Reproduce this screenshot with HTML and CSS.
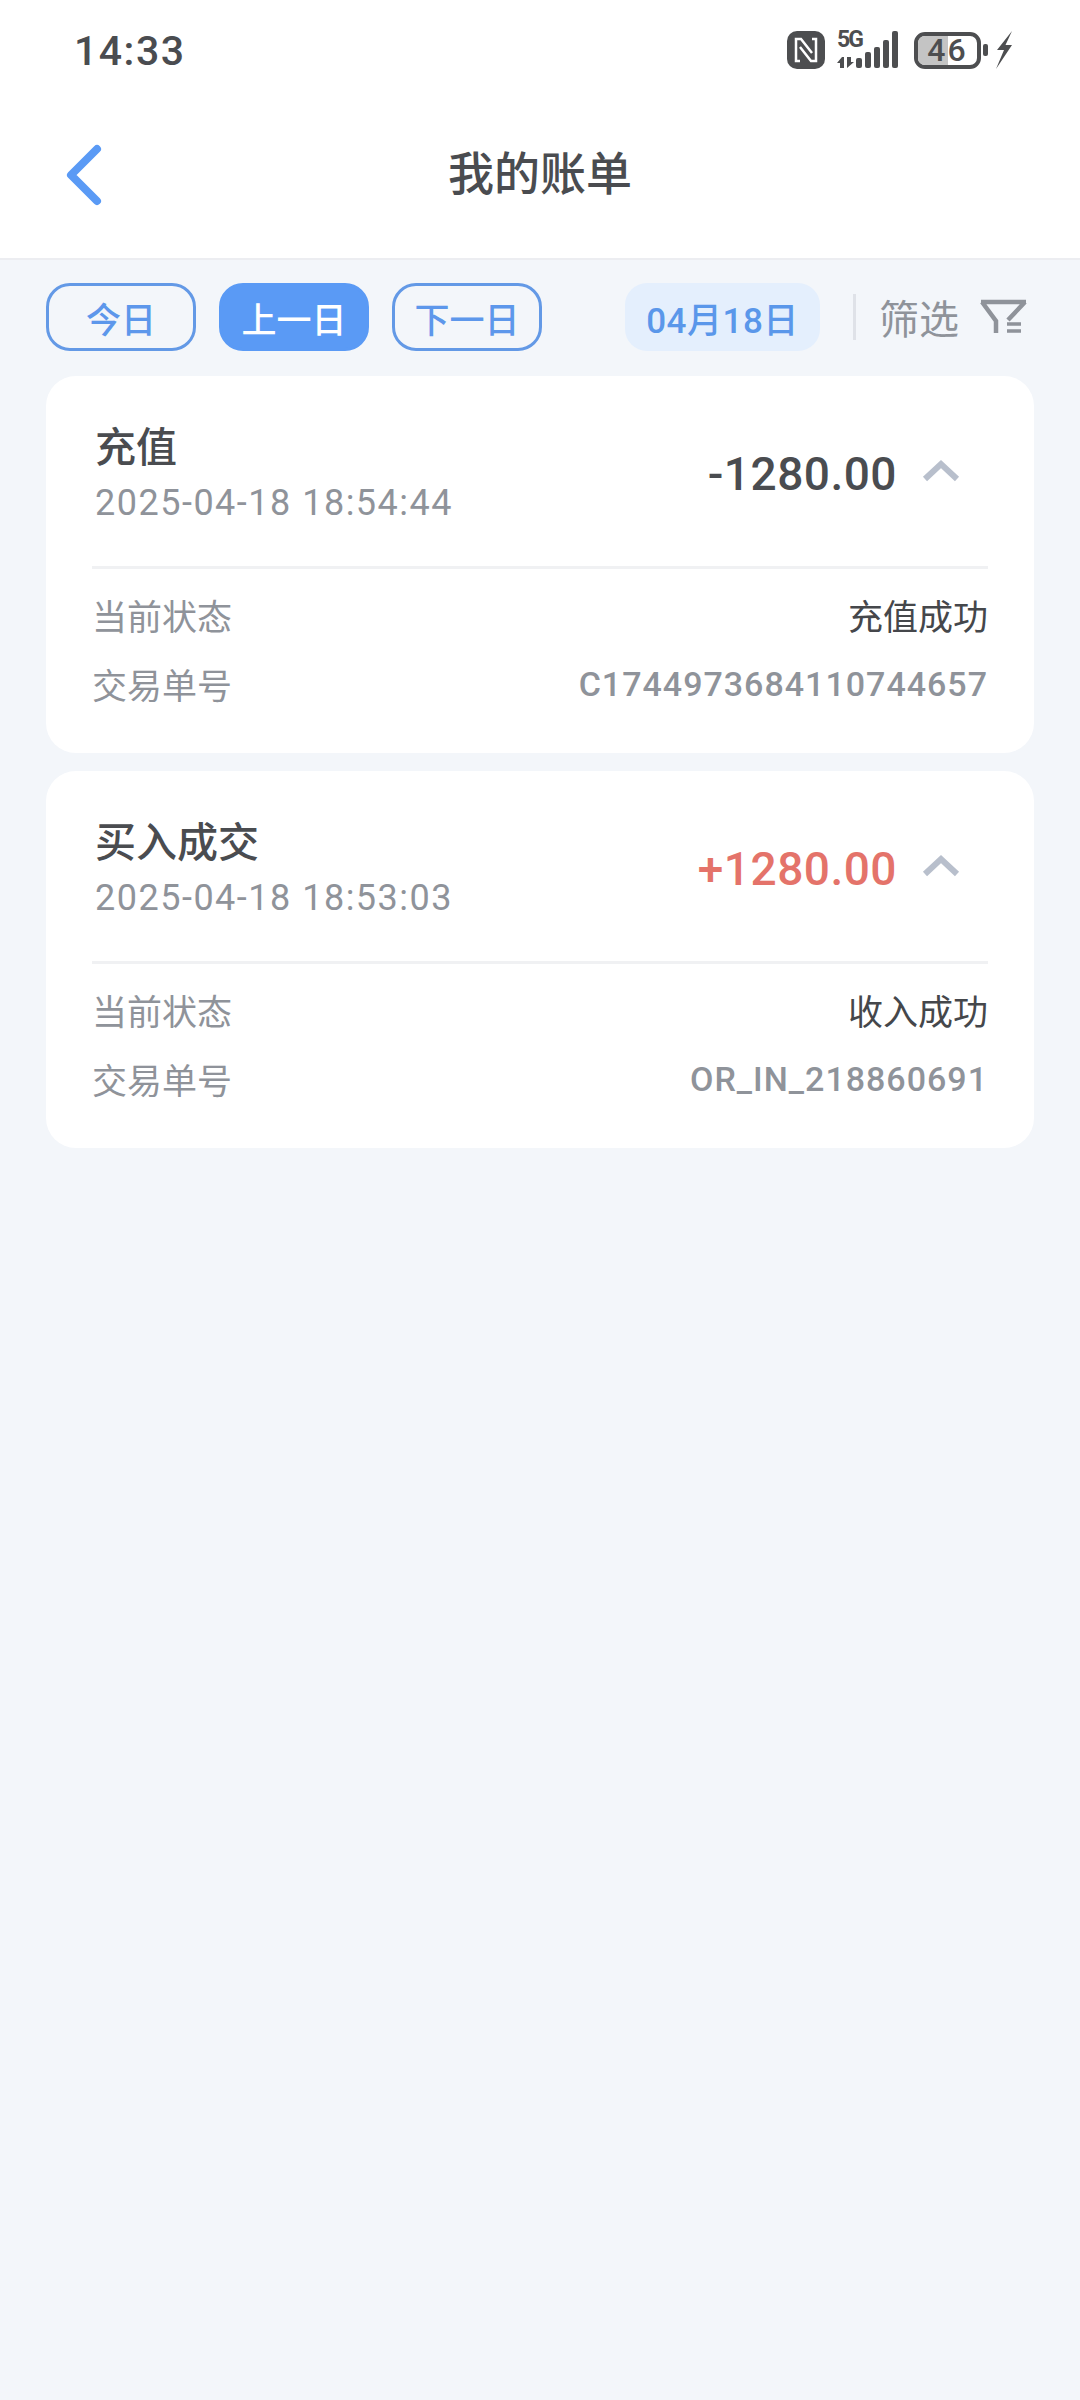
FILE: index.html
```html
<!DOCTYPE html>
<html lang="zh-CN">
<head>
  <meta charset="UTF-8">
  <title>我的账单</title>
  <link rel="stylesheet" href="styles.css">
</head>
<body>

<header class="top">
  <div class="status">
    <span class="clock">14:33</span>
    <div class="status-icons">
      <svg class="nfc" width="38" height="38" viewBox="0 0 38 38">
        <rect width="38" height="38" rx="10" fill="#4d4e50"/>
        <path d="M13 30H9V8h5l11 14M25 8h4v22h-5L13 16" fill="none" stroke="#fff" stroke-width="2.500"/>
      </svg>
      <div class="signal">
        <span class="five-g">5G</span>
        <svg width="61" height="38" viewBox="0 0 61 38">
          <path d="M5 26L0 32h3v5h4V26zM10 26v11l7-6h-3v-5z" fill="#4d4e50"/>
          <rect x="19" y="27" width="6" height="10" rx="2" fill="#4d4e50"/>
          <rect x="28" y="21" width="6" height="16" rx="2" fill="#4d4e50"/>
          <rect x="37" y="16" width="6" height="21" rx="2" fill="#4d4e50"/>
          <rect x="46" y="9" width="6" height="28" rx="2" fill="#4d4e50"/>
          <rect x="55" y="0" width="6" height="37" rx="2" fill="#4d4e50"/>
        </svg>
      </div>
      <div class="battery">
        <div class="battery-body">
          <span class="battery-fill"></span>
          <span class="battery-num">46</span>
        </div>
        <span class="battery-cap"></span>
      </div>
      <svg class="bolt" width="16" height="38" viewBox="0 0 16 38">
        <path d="M16 0L1 19h7L0 38l16-24H9.500L16 0z" fill="#4d4e50"/>
      </svg>
    </div>
  </div>
  <div class="navbar">
    <svg class="back" width="36" height="62" viewBox="0 0 36 62">
      <path d="M31 5L5 31l26 26" fill="none" stroke="#5a9af5" stroke-width="8" stroke-linecap="round" stroke-linejoin="round"/>
    </svg>
    <h1>我的账单</h1>
  </div>
</header>

<div class="toolbar">
  <button class="day">今日</button>
  <button class="day active">上一日</button>
  <button class="day">下一日</button>
  <span class="date-chip">04月18日</span>
  <span class="sep"></span>
  <span class="filter-label">筛选</span>
  <svg class="filter-icon" width="48" height="38" viewBox="0 0 48 38">
    <path d="M1 4h45M2 4l14 19v12M45 4L28 22" fill="none" stroke="#8f939a" stroke-width="4.500"/>
    <path d="M27 26h14M27 33h14" fill="none" stroke="#8f939a" stroke-width="3.500"/>
  </svg>
</div>

<main class="list">
  <section class="card">
    <div class="card-head">
      <div>
        <div class="card-title">充值</div>
        <div class="card-time">2025-04-18 18:54:44</div>
      </div>
      <div class="amount">-1280.00</div>
      <svg class="chevron" width="38" height="24" viewBox="0 0 38 24">
        <path d="M3 20L19 5l16 15" fill="none" stroke="#b8bfcc" stroke-width="6"/>
      </svg>
    </div>
    <div class="row">
      <span class="row-label">当前状态</span>
      <span class="row-value">充值成功</span>
    </div>
    <div class="row">
      <span class="row-label">交易单号</span>
      <span class="row-no">C1744973684110744657</span>
    </div>
  </section>

  <section class="card">
    <div class="card-head">
      <div>
        <div class="card-title">买入成交</div>
        <div class="card-time">2025-04-18 18:53:03</div>
      </div>
      <div class="amount income">+1280.00</div>
      <svg class="chevron" width="38" height="24" viewBox="0 0 38 24">
        <path d="M3 20L19 5l16 15" fill="none" stroke="#b8bfcc" stroke-width="6"/>
      </svg>
    </div>
    <div class="row">
      <span class="row-label">当前状态</span>
      <span class="row-value">收入成功</span>
    </div>
    <div class="row">
      <span class="row-label">交易单号</span>
      <span class="row-no">OR_IN_218860691</span>
    </div>
  </section>
</main>

</body>
</html>
```

FILE: styles.css
```css
* {
  box-sizing: border-box;
}

body {
  margin: 0;
  min-height: 2400px;
  background-color: #f3f6fa;
  font-family: Roboto, "Noto Sans CJK SC", sans-serif;
  color: #4a4c50;
}

.top {
  height: 260px;
  background-color: #fff;
  border-bottom: 2px solid #ecedf1;
}

.status {
  height: 100px;
  padding: 0 68px 0 74px;
  display: flex;
  align-items: center;
  justify-content: space-between;
}

.clock {
  margin-top: 2px;
  font-size: 41px;
  font-weight: 500;
  letter-spacing: 1.500px;
}

.status-icons {
  display: flex;
  align-items: center;
}

.signal {
  position: relative;
  width: 61px;
  height: 38px;
  margin-left: 12px;
}

.five-g {
  position: absolute;
  left: 0;
  top: -1px;
  font-size: 23px;
  line-height: 20px;
  font-weight: 700;
  letter-spacing: -2px;
  color: #4d4e50;
}

.battery {
  display: flex;
  align-items: center;
  gap: 2px;
  margin-left: 16px;
}

.battery-body {
  position: relative;
  width: 67px;
  height: 37px;
  border: 4px solid #4d4e50;
  border-radius: 11px;
  display: flex;
  align-items: center;
  justify-content: center;
}

.battery-fill {
  position: absolute;
  left: 0;
  top: 0;
  bottom: 0;
  width: 50%;
  background-color: #c4c4c4;
  border-radius: 7px 0 0 7px;
}

.battery-num {
  position: relative;
  font-size: 32px;
  font-weight: 500;
  line-height: 1;
  letter-spacing: 2px;
  color: #4d4e50;
}

.battery-cap {
  width: 5px;
  height: 12px;
  background-color: #4d4e50;
  border-radius: 2px;
}

.bolt {
  margin-left: 8px;
}

.navbar {
  position: relative;
  height: 158px;
  display: flex;
  align-items: center;
  justify-content: center;
}

.back {
  position: absolute;
  left: 66px;
  top: 44px;
}

h1 {
  margin: 0 0 18px;
  font-size: 46px;
  font-weight: 500;
}

.toolbar {
  height: 116px;
  padding: 23px 46px 25px;
  display: flex;
  align-items: center;
}

.day {
  width: 150px;
  height: 68px;
  margin-right: 23px;
  padding: 0;
  border: 3px solid #6399e6;
  border-radius: 24px;
  background: none;
  color: #5d97eb;
  font-family: inherit;
  font-size: 35px;
  font-weight: 500;
}

.day.active {
  background-color: #5a9af5;
  border-color: #5a9af5;
  color: #fff;
}

.date-chip {
  width: 195px;
  height: 68px;
  margin-left: 60px;
  border-radius: 22px;
  background-color: #e4effd;
  color: #5a97ea;
  font-size: 35px;
  font-weight: 500;
  letter-spacing: 0.500px;
  display: flex;
  align-items: center;
  justify-content: center;
}

.sep {
  width: 3px;
  height: 46px;
  margin: 0 23px 0 33px;
  background-color: #dfe2e8;
}

.filter-label {
  width: 101px;
  color: #8f939a;
  font-size: 40px;
}

.list {
  padding: 0 46px;
  display: flex;
  flex-direction: column;
  gap: 18px;
}

.card {
  height: 377px;
  padding: 0 46px;
  border-radius: 30px;
  background-color: #fff;
}

.card-head {
  height: 193px;
  padding: 0 28px 0 3px;
  margin-bottom: 11px;
  border-bottom: 3px solid #f0f1f3;
  display: flex;
  align-items: center;
}

.card-title {
  margin-top: 3px;
  font-size: 41px;
  font-weight: 500;
  line-height: 56px;
}

.card-time {
  margin-top: 5px;
  font-size: 36px;
  line-height: 44px;
  letter-spacing: 1.500px;
  color: #8f939a;
}

.amount {
  margin-left: auto;
  margin-top: 6px;
  font-size: 46px;
  font-weight: 500;
  letter-spacing: 0.500px;
}

.amount.income {
  color: #e4736a;
}

.chevron {
  margin-left: 25px;
}

.row {
  height: 69px;
  display: flex;
  align-items: center;
  justify-content: space-between;
}

.row-label {
  color: #8f939a;
  font-size: 35px;
}

.row-value {
  font-size: 35px;
  color: #45474b;
}

.row-no {
  color: #8f939a;
  font-size: 34px;
  font-weight: 500;
  letter-spacing: 1px;
}
```
